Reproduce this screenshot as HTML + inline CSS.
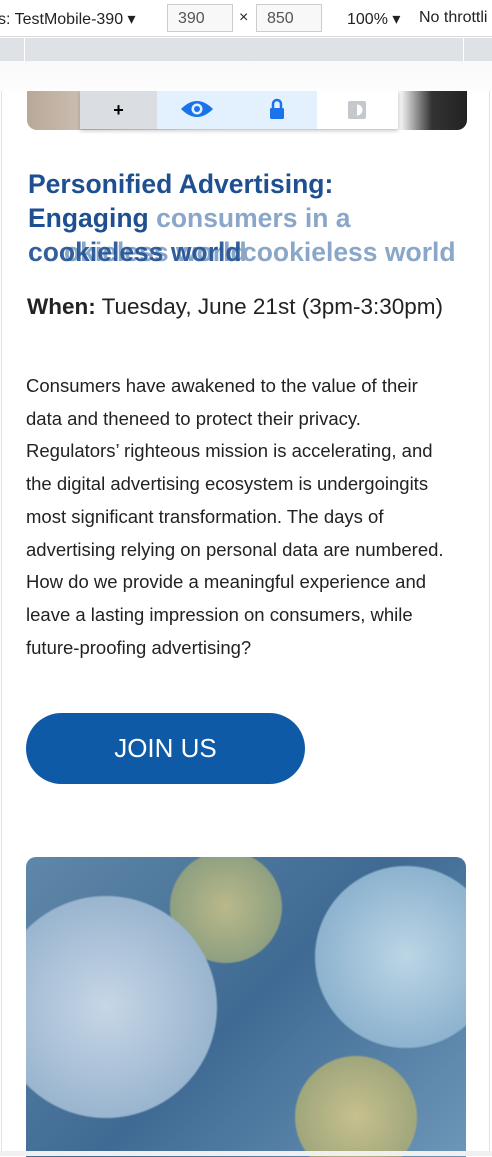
<!DOCTYPE html>
<html><head><meta charset="utf-8"><style>
*{margin:0;padding:0;box-sizing:border-box}
body{width:492px;height:1156px;overflow:hidden;background:#fff;font-family:"Liberation Sans",Arial,sans-serif;position:relative}
.tb{position:absolute;left:0;top:0;width:492px;height:37px;background:#fff;border-bottom:1px solid #d8d8d8;font-size:16px;color:#222}
.tb span{position:absolute;top:9px}
.inp{position:absolute;top:4px;height:28px;border:1px solid #ccc;background:#f8f8f8;color:#555;font-size:16px;padding:5px 0 0 10px}
.g1{position:absolute;left:0;top:38px;width:492px;height:23px;background:#dee1e6}
.g1 i{position:absolute;top:0;width:1px;height:23px;background:#fff}
.g2{position:absolute;left:0;top:61px;width:492px;height:30px;background:linear-gradient(#f9f9fa,#fdfdfd)}
.page{position:absolute;left:1px;top:91px;width:489px;height:1060px;background:#fff;border-left:1px solid #e2e2e2;border-right:1px solid #e2e2e2;overflow:hidden}
.h{position:absolute;left:26px;font-size:26.5px;font-weight:bold;color:#1d4f91;white-space:nowrap}
.lt{color:#8aa6c9}
p.b{position:absolute;left:26px;top:370px;width:466px;font-size:18.5px;line-height:32.7px;color:#222;white-space:nowrap}
.btn{position:absolute;left:26px;top:713px;width:279px;height:71px;border-radius:36px;background:#0e5aa7;color:#fff;font-size:26px;text-align:center;line-height:71px}
.img{position:absolute;left:26px;top:857px;width:440px;height:300px;border-radius:10px 10px 0 0;background:
radial-gradient(circle at 80px 150px,#c6d6e6 0,#9ab5cf 110px,transparent 112px),
radial-gradient(circle at 200px 50px,#b9b98a 0,#8fa080 55px,transparent 57px),
radial-gradient(circle at 380px 100px,#bcd5e5 0,#8db3cf 90px,transparent 92px),
radial-gradient(circle at 330px 260px,#c7c08e 0,#a0a77c 60px,transparent 62px),
linear-gradient(135deg,#5f87a8,#3f6a93 50%,#6d96b8)}
</style></head><body>
<div class="tb"><span style="left:-2px">s: TestMobile-390 ▾</span>
<div class="inp" style="left:167px;width:66px">390</div><span style="left:239px">×</span>
<div class="inp" style="left:256px;width:66px">850</div>
<span style="left:347px">100% ▾</span><span style="left:419px">No throttli</span></div>
<div class="g1"><i style="left:24px"></i><i style="left:463px"></i></div>
<div class="g2"></div>
<div class="page">
 <div style="position:absolute;left:25px;top:-10px;width:440px;height:49px;border-radius:0 0 10px 10px;background:linear-gradient(90deg,#b8a898,#cfc2b5 15%,#eee 40%,#f2f2f2 85%,#333 92%,#222);"></div>
 <div style="position:absolute;left:78px;top:0;width:318px;height:38px;background:#fff;box-shadow:0 2px 4px rgba(0,0,0,.2)">
  <div style="position:absolute;left:0;top:0;width:77px;height:38px;background:#dadde1;text-align:center;font-weight:bold;font-size:18px;line-height:38px">+</div>
  <div style="position:absolute;left:77px;top:0;width:160px;height:38px;background:#e3f0fd"></div>
  <svg style="position:absolute;left:100px;top:8px" width="34" height="20" viewBox="0 0 34 20"><path d="M1 10Q17-6 33 10Q17 26 1 10Z" fill="#1a73e8"/><circle cx="17" cy="10" r="5.5" fill="#e3f0fd"/><circle cx="17" cy="10" r="3" fill="#1a73e8"/></svg>
  <svg style="position:absolute;left:189px;top:7px" width="16" height="22" viewBox="0 0 16 22"><path d="M4 10V6a4 4 0 0 1 8 0v4" stroke="#1a73e8" stroke-width="2.5" fill="none"/><rect x="1" y="10" width="14" height="11" rx="1.5" fill="#1a73e8"/></svg>
  <svg style="position:absolute;left:267px;top:9px" width="20" height="20" viewBox="0 0 20 20"><rect x="1" y="1" width="18" height="18" rx="2" fill="#c4c8cc"/><circle cx="10" cy="10" r="5.5" fill="#fff"/><path d="M10 4.5a5.5 5.5 0 0 0 0 11Z" fill="#c4c8cc"/></svg>
 </div>
 <div class="h" style="top:78px">Personified Advertising:</div>
 <div class="h" style="top:112px">Engaging <span class="lt">consumers in a</span></div>
 <div class="h lt" style="top:146px;left:62px">okieless world</div>
 <div class="h lt" style="top:146px;left:240px">cookieless world</div>
 <div class="h" style="top:146px;color:rgba(29,79,145,.9)">cookieless world</div>
 <div style="position:absolute;left:25px;top:203px;font-size:22.5px;color:#222"><b>When:</b> Tuesday, June 21st (3pm-3:30pm)</div>
</div>
<p class="b">Consumers have awakened to the value of their<br>data and theneed to protect their privacy.<br>Regulators’ righteous mission is accelerating, and<br>the digital advertising ecosystem is undergoingits<br>most significant transformation. The days of<br>advertising relying on personal data are numbered.<br>How do we provide a meaningful experience and<br>leave a lasting impression on consumers, while<br>future-proofing advertising?</p>
<div class="btn">JOIN US</div>
<div class="img"></div>
<div style="position:absolute;left:0;top:1151px;width:492px;height:5px;background:#f0f0f0"></div>
</body></html>
